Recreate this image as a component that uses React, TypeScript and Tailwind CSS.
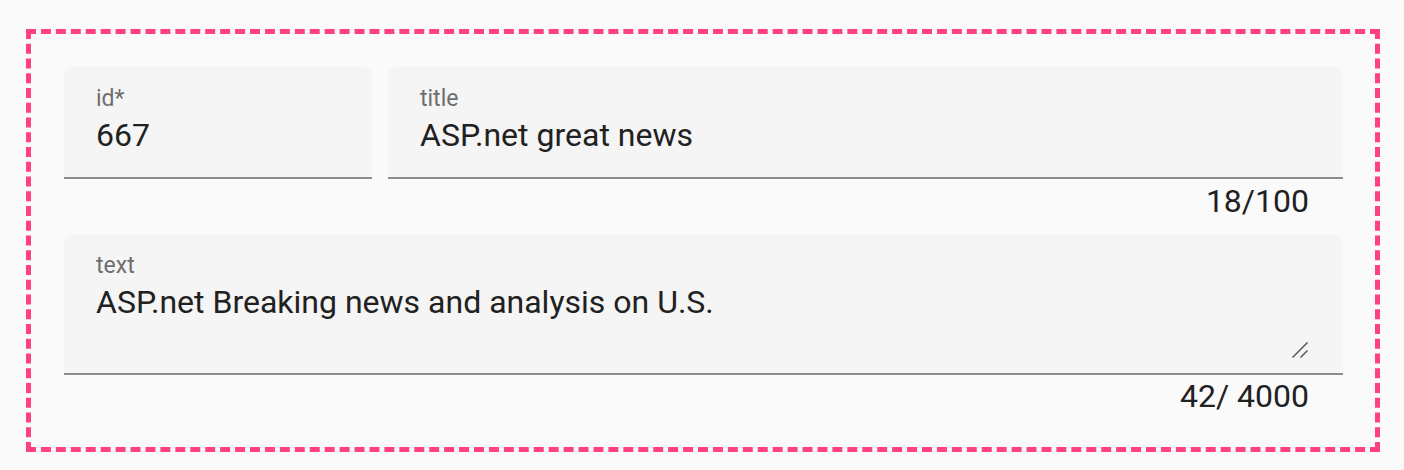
export default function App() {
  return (
    <div className="min-h-[470px] w-full bg-[#fafafa] pl-[26px] pt-[29px] font-['Roboto',sans-serif]">
      <div className="w-[1354px] border-[5px] border-dashed border-[#ff4081] pl-[33px] pr-[32px] pt-[33px]">
        <div className="flex gap-[16px]">
          <div className="h-[112px] w-[308px] rounded-t-[8px] border-b-2 border-[#8c8c8c] bg-[#f5f5f5] pl-[32px] pt-[20px]">
            <div className="text-[23px] leading-none text-[#6e6e6e]">id*</div>
            <div className="mt-[9px] text-[32px] leading-none text-[#212121]">667</div>
          </div>
          <div className="flex-1">
            <div className="h-[112px] rounded-t-[8px] border-b-2 border-[#8c8c8c] bg-[#f5f5f5] pl-[32px] pt-[20px]">
              <div className="text-[23px] leading-none text-[#6e6e6e]">title</div>
              <div className="mt-[9px] text-[32px] leading-none text-[#212121]">ASP.net great news</div>
            </div>
            <div className="h-[56px] pr-[34px] pt-[6px] text-right text-[32px] leading-none text-[#212121]">18/100</div>
          </div>
        </div>
        <div className="relative h-[140px] rounded-t-[8px] border-b-2 border-[#8c8c8c] bg-[#f5f5f5] pl-[32px] pt-[19px]">
          <div className="text-[23px] leading-none text-[#6e6e6e]">text</div>
          <div className="mt-[9px] text-[32px] leading-none text-[#212121]">ASP.net Breaking news and analysis on U.S.</div>
          <svg className="absolute bottom-[15px] right-[35px] h-[16px] w-[16px]" viewBox="0 0 16 16" fill="none" stroke="#555" strokeWidth="1.5">
            <line x1="0.5" y1="15.5" x2="15.5" y2="0.5" />
            <line x1="8.5" y1="15.5" x2="15.5" y2="8.5" />
          </svg>
        </div>
        <div className="h-[72px] pr-[34px] pt-[5px] text-right text-[32px] leading-none text-[#212121]">42/ 4000</div>
      </div>
    </div>
  )
}
